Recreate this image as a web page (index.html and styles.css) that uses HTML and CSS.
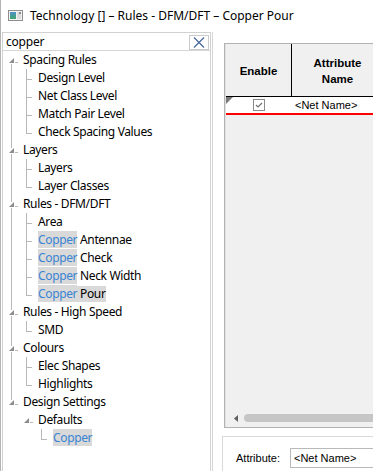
FILE: index.html
```html
<!DOCTYPE html>
<html lang="en">

<head>
    <meta charset="UTF-8">
    <meta name="viewport" content="width=device-width, initial-scale=1.0">
    <title>Technology [] – Rules - DFM/DFT – Copper Pour</title>

    <link rel="stylesheet" href="styles.css">
</head>

<body>
    <!-- tree connector pieces, 15x18 each -->
    <svg class="defs" width="0" height="0">
        <symbol id="pipe" viewBox="0 0 15 18"><rect x="6" y="0" width="1" height="18" /></symbol>
        <symbol id="tee" viewBox="0 0 15 18"><rect x="6" y="0" width="1" height="18" /><rect x="7" y="10" width="5" height="1" /></symbol>
        <symbol id="elbow" viewBox="0 0 15 18"><rect x="6" y="0" width="1" height="11" /><rect x="7" y="10" width="5" height="1" /></symbol>
        <symbol id="exp-first" viewBox="0 0 15 18"><rect x="6" y="13" width="1" height="5" /><rect x="10" y="11" width="3" height="1" /><polygon points="4,12 9,7 9,12" fill="#8c8c8c" /></symbol>
        <symbol id="exp-mid" viewBox="0 0 15 18"><rect x="6" y="0" width="1" height="7" /><rect x="6" y="13" width="1" height="5" /><rect x="10" y="11" width="3" height="1" /><polygon points="4,12 9,7 9,12" fill="#8c8c8c" /></symbol>
        <symbol id="exp-last" viewBox="0 0 15 18"><rect x="6" y="0" width="1" height="7" /><rect x="10" y="11" width="3" height="1" /><polygon points="4,12 9,7 9,12" fill="#8c8c8c" /></symbol>
        <symbol id="exp-only" viewBox="0 0 15 18"><rect x="10" y="11" width="3" height="1" /><polygon points="4,12 9,7 9,12" fill="#8c8c8c" /></symbol>
    </svg>

    <div class="window">
        <div class="titlebar">
            <svg class="app-icon" width="15" height="11" viewBox="0 0 15 11">
                <defs>
                    <linearGradient id="ig" x1="0" y1="0" x2="0" y2="1">
                        <stop offset="0" stop-color="#4f8fc9" />
                        <stop offset="1" stop-color="#3fa86c" />
                    </linearGradient>
                </defs>
                <rect x="0.5" y="0.5" width="14" height="10" fill="#f4f4f4" stroke="#8e8e8e" />
                <rect x="2" y="2" width="6" height="7" fill="url(#ig)" />
                <rect x="9" y="2" width="4" height="7" fill="#dcdcdc" />
                <rect x="11" y="2" width="2" height="2" fill="#8a8a8a" />
            </svg>
            <span class="title">Technology [] – Rules - DFM/DFT – Copper Pour</span>
        </div>

        <div class="content">
            <div class="sidebar">
                <div class="search">
                    <span class="search-text">copper</span>
                    <span class="search-clear">
                        <svg width="12" height="11" viewBox="0 0 12 11">
                            <path d="M1 0.5 L11 10.5 M11 0.5 L1 10.5" stroke="#46679a" stroke-width="1.2" fill="none" />
                        </svg>
                    </span>
                </div>

                <div class="tree">
                    <div class="node"><svg class="g"><use href="#exp-first" /></svg><span class="label">Spacing Rules</span></div>
                    <div class="node"><svg class="g"><use href="#pipe" /></svg><svg class="g"><use href="#tee" /></svg><span class="label">Design Level</span></div>
                    <div class="node"><svg class="g"><use href="#pipe" /></svg><svg class="g"><use href="#tee" /></svg><span class="label">Net Class Level</span></div>
                    <div class="node"><svg class="g"><use href="#pipe" /></svg><svg class="g"><use href="#tee" /></svg><span class="label">Match Pair Level</span></div>
                    <div class="node"><svg class="g"><use href="#pipe" /></svg><svg class="g"><use href="#elbow" /></svg><span class="label">Check Spacing Values</span></div>

                    <div class="node"><svg class="g"><use href="#exp-mid" /></svg><span class="label">Layers</span></div>
                    <div class="node"><svg class="g"><use href="#pipe" /></svg><svg class="g"><use href="#tee" /></svg><span class="label">Layers</span></div>
                    <div class="node"><svg class="g"><use href="#pipe" /></svg><svg class="g"><use href="#elbow" /></svg><span class="label">Layer Classes</span></div>

                    <div class="node"><svg class="g"><use href="#exp-mid" /></svg><span class="label">Rules - DFM/DFT</span></div>
                    <div class="node"><svg class="g"><use href="#pipe" /></svg><svg class="g"><use href="#tee" /></svg><span class="label">Area</span></div>
                    <div class="node"><svg class="g"><use href="#pipe" /></svg><svg class="g"><use href="#tee" /></svg><span class="label"><span class="hit">Copper</span> Antennae</span></div>
                    <div class="node"><svg class="g"><use href="#pipe" /></svg><svg class="g"><use href="#tee" /></svg><span class="label"><span class="hit">Copper</span> Check</span></div>
                    <div class="node"><svg class="g"><use href="#pipe" /></svg><svg class="g"><use href="#tee" /></svg><span class="label"><span class="hit">Copper</span> Neck Width</span></div>
                    <div class="node"><svg class="g"><use href="#pipe" /></svg><svg class="g"><use href="#elbow" /></svg><span class="label selected"><span class="hit">Copper</span> Pour</span></div>

                    <div class="node"><svg class="g"><use href="#exp-mid" /></svg><span class="label">Rules - High Speed</span></div>
                    <div class="node"><svg class="g"><use href="#pipe" /></svg><svg class="g"><use href="#elbow" /></svg><span class="label">SMD</span></div>

                    <div class="node"><svg class="g"><use href="#exp-mid" /></svg><span class="label">Colours</span></div>
                    <div class="node"><svg class="g"><use href="#pipe" /></svg><svg class="g"><use href="#tee" /></svg><span class="label">Elec Shapes</span></div>
                    <div class="node"><svg class="g"><use href="#pipe" /></svg><svg class="g"><use href="#elbow" /></svg><span class="label">Highlights</span></div>

                    <div class="node"><svg class="g"><use href="#exp-last" /></svg><span class="label">Design Settings</span></div>
                    <div class="node"><svg class="g"></svg><svg class="g"><use href="#exp-only" /></svg><span class="label">Defaults</span></div>
                    <div class="node"><svg class="g"></svg><svg class="g"></svg><svg class="g"><use href="#elbow" /></svg><span class="label selected"><span class="hit">Copper</span></span></div>
                </div>
            </div>

            <div class="splitter"></div>

            <div class="main">
                <div class="grid">
                    <div class="grid-head">
                        <div class="col-enable">Enable</div>
                        <div class="col-attr">Attribute<br>Name</div>
                    </div>
                    <div class="grid-row">
                        <div class="cell-enable">
                            <svg class="row-mark" width="7" height="7" viewBox="0 0 7 7">
                                <polygon points="0,0 7,0 0,7" fill="#7a7a7a" />
                            </svg>
                            <span class="check">
                                <svg width="10" height="10" viewBox="0 0 10 10">
                                    <path d="M2 5 L4 7 L8 3" stroke="#707070" stroke-width="1.2" fill="none" />
                                </svg>
                            </span>
                        </div>
                        <div class="cell-attr">&lt;Net Name&gt;</div>
                    </div>
                    <div class="grid-body"></div>
                    <div class="hscroll">
                        <svg class="arrow" width="4" height="7" viewBox="0 0 4 7">
                            <polygon points="4,0 4,7 0,3.5" fill="#606060" />
                        </svg>
                        <div class="thumb"></div>
                    </div>
                </div>

                <div class="attr-panel">
                    <span class="attr-label">Attribute:</span>
                    <span class="attr-input">&lt;Net Name&gt;</span>
                </div>
            </div>
        </div>
    </div>
</body>

</html>
```

FILE: styles.css
```css
* {
    margin: 0;
    padding: 0;
    box-sizing: border-box;
}

body {
    width: 373px;
    height: 471px;
    overflow: hidden;
    background: #fff;
    font-family: "Noto Sans", "Liberation Sans", sans-serif;
    font-size: 12px;
    color: #000;
}

.defs {
    position: absolute;
    width: 0;
    height: 0;
}

.window {
    height: 471px;
    border-left: 1px solid #b4b4b4;
    display: flex;
    flex-direction: column;
}

/* title bar */

.titlebar {
    height: 30px;
    display: flex;
    align-items: center;
    padding-left: 7px;
}

.app-icon {
    margin-right: 7px;
}

.title {
    font-size: 12px;
    white-space: nowrap;
}

.content {
    flex: 1;
    display: flex;
    padding-top: 2px;
    min-height: 0;
}

/* left tree panel */

.sidebar {
    width: 209px;
    margin-left: 1px;
    border: 1px solid #d2d2d2;
    border-bottom: none;
    display: flex;
    flex-direction: column;
}

.search {
    height: 18px;
    border-bottom: 1px solid #d6d6d6;
    display: flex;
    align-items: center;
    padding-left: 3px;
}

.search-text {
    flex: 1;
    font-size: 12px;
    letter-spacing: -0.2px;
}

.search-clear {
    width: 20px;
    height: 15px;
    margin-right: 1px;
    margin-top: 1px;
    border: 1px solid #cbcbcb;
    display: flex;
    align-items: center;
    justify-content: center;
}

.tree {
    padding-left: 2px;
}

.node {
    height: 18px;
    display: flex;
    align-items: center;
}

.g {
    width: 15px;
    height: 18px;
    flex: none;
    fill: #b8b8b8;
}

.label {
    margin-left: 3px;
    line-height: 16px;
    white-space: nowrap;
    letter-spacing: -0.35px;
}

.hit {
    color: #3a84d2;
    background: #d9d9d9;
}

.selected {
    background: #d9d9d9;
}

.splitter {
    width: 1px;
    margin-left: 1px;
    background: #d6d6d6;
}

/* right side */

.main {
    flex: 1;
    min-width: 0;
    overflow: hidden;
    padding-top: 11px;
}

.grid {
    margin-left: 11px;
    width: 200px;
    border: 1px solid #b2b2b2;
    border-right: none;
    box-shadow: inset 1px 0 #e2e2e2;
    background: #f0f0f0;
    font-family: "Liberation Sans", Arial, sans-serif;
    font-size: 11px;
    padding-left: 1px;
    padding-bottom: 2px;
}

.grid-head {
    height: 53px;
    display: flex;
    border-bottom: 1px solid #000;
    font-weight: bold;
}

.col-enable {
    width: 66px;
    border-right: 1px solid #000;
    display: flex;
    align-items: center;
    justify-content: center;
    padding-top: 1px;
    font-size: 11.5px;
}

.col-attr {
    width: 91px;
    display: flex;
    align-items: center;
    justify-content: center;
    text-align: center;
    line-height: 16px;
    font-size: 11.5px;
    padding-top: 1px;
}

.grid-row {
    height: 18px;
    display: flex;
    background: #fff;
    border-bottom: 2px solid #ff0000;
}

.cell-enable {
    width: 66px;
    display: flex;
}

.row-mark {
    margin-top: 0;
}

.check {
    width: 12px;
    height: 12px;
    margin-left: 20px;
    margin-top: 2px;
    border: 1px solid #8a8a8a;
    display: flex;
    align-items: center;
    justify-content: center;
}

.cell-attr {
    padding-left: 3px;
    line-height: 16px;
    white-space: nowrap;
}

.grid-body {
    height: 296px;
}

.hscroll {
    height: 14px;
    display: flex;
    align-items: center;
    padding-left: 8px;
}

.arrow {
    margin-right: 6px;
}

.thumb {
    flex: 1;
    height: 8px;
    border-radius: 4px;
    background: #c6c6c6;
}

.attr-panel {
    margin-top: 8px;
    margin-left: 9px;
    height: 60px;
    border-top: 1px solid #d8d8d8;
    border-left: 1px solid #d8d8d8;
    display: flex;
    align-items: flex-start;
    padding-top: 11px;
    padding-left: 13px;
    font-family: "Liberation Sans", Arial, sans-serif;
    font-size: 11px;
}

.attr-label {
    width: 54px;
    line-height: 20px;
}

.attr-input {
    flex: 1;
    height: 20px;
    border: 1px solid #b9b9b9;
    border-right: none;
    padding-left: 3px;
    line-height: 18px;
    white-space: nowrap;
}
```
